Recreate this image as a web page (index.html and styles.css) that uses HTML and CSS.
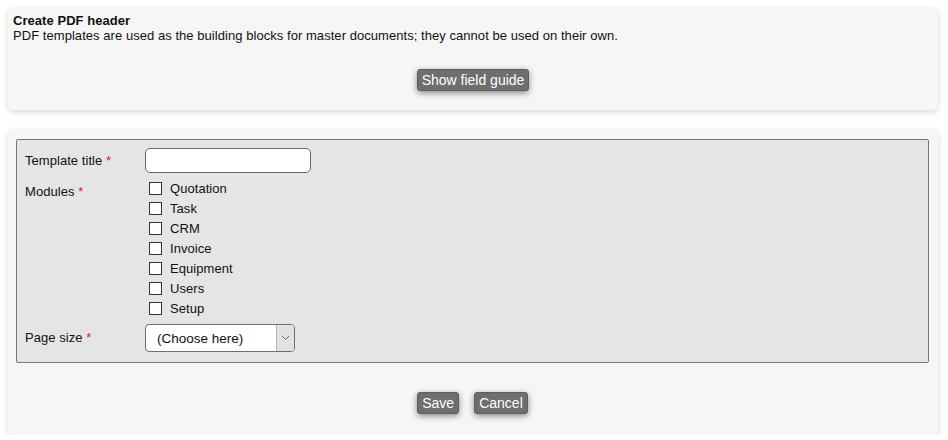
FILE: index.html
```html
<!DOCTYPE html>
<html>
<head>
<meta charset="utf-8">
<link rel="stylesheet" href="styles.css">
</head>
<body>
<div class="card intro">
  <div class="title">Create PDF header</div>
  <div class="desc">PDF templates are used as the building blocks for master documents; they cannot be used on their own.</div>
  <div class="actions guide-actions">
    <button class="btn" type="button">Show field guide</button>
  </div>
</div>
<div class="card formcard">
  <div class="fieldset">
    <label class="lbl center">Template title <span class="req">*</span></label>
    <div class="ctrl"><input class="text-input" type="text"></div>
    <label class="lbl top">Modules <span class="req">*</span></label>
    <div class="checks">
      <label class="check"><input type="checkbox"><span>Quotation</span></label>
      <label class="check"><input type="checkbox"><span>Task</span></label>
      <label class="check"><input type="checkbox"><span>CRM</span></label>
      <label class="check"><input type="checkbox"><span>Invoice</span></label>
      <label class="check"><input type="checkbox"><span>Equipment</span></label>
      <label class="check"><input type="checkbox"><span>Users</span></label>
      <label class="check"><input type="checkbox"><span>Setup</span></label>
    </div>
    <label class="lbl center">Page size <span class="req">*</span></label>
    <div class="ctrl select-row">
      <div class="select-wrap">
        <select class="select"><option>(Choose here)</option></select>
        <span class="arrow"><svg width="9" height="6" viewBox="0 0 9 6"><path d="M1 1 L4.5 4.5 L8 1" fill="none" stroke="#666" stroke-width="1"/></svg></span>
      </div>
    </div>
  </div>
  <div class="actions form-actions">
    <button class="btn" type="button">Save</button>
    <button class="btn" type="button">Cancel</button>
  </div>
</div>
</body>
</html>
```
FILE: styles.css
```css
html, body {
  margin: 0;
  padding: 0;
  background: #ffffff;
}
body {
  padding: 8px 10px 0 8px;
  font-family: "Liberation Sans", Arial, sans-serif;
  font-size: 13px;
  line-height: 15px;
  letter-spacing: 0.05px;
  color: #111111;
}
.card {
  background: #f6f6f6;
  border-radius: 5px;
  box-shadow: 0 2px 6px rgba(0, 0, 0, 0.16);
}
.intro {
  padding: 5px 5px 19px 5px;
}
.title {
  font-weight: bold;
}
.actions {
  display: flex;
  justify-content: center;
  gap: 15px;
}
.guide-actions {
  margin-top: 26px;
}
.btn {
  font-family: "Liberation Sans", Arial, sans-serif;
  font-size: 14px;
  line-height: 16px;
  letter-spacing: 0;
  color: #ffffff;
  background: #6e6e6e;
  border: 1px solid #5e5e5e;
  border-radius: 3px;
  padding: 2px 4px;
  box-shadow: 0 2px 6px rgba(0, 0, 0, 0.45);
  cursor: pointer;
}
.formcard {
  margin-top: 20px;
  padding: 9px 9px 21px 8px;
}
.fieldset {
  display: grid;
  grid-template-columns: 120px 1fr;
  row-gap: 5px;
  background: #e5e5e5;
  border: 1px solid #777777;
  border-radius: 2px;
  padding: 8px 8px 10px 8px;
}
.lbl.center {
  align-self: center;
}
.lbl.top {
  padding-top: 6px;
}
.req {
  color: #e02020;
}
.text-input {
  display: block;
  box-sizing: border-box;
  width: 166px;
  height: 25px;
  margin: 0;
  border: 1px solid #6a6a6a;
  border-radius: 5px;
  background: #ffffff;
  font-family: "Liberation Sans", Arial, sans-serif;
  font-size: 13px;
  padding: 0 6px;
}
.checks {
  display: flex;
  flex-direction: column;
}
.check {
  display: flex;
  align-items: center;
  height: 20px;
}
.check input {
  appearance: none;
  -webkit-appearance: none;
  box-sizing: border-box;
  width: 13px;
  height: 13px;
  margin: 0 8px 0 4px;
  background: #ffffff;
  border: 1px solid #333333;
  border-radius: 0;
}
.select-row {
  padding-top: 1px;
}
.select-wrap {
  display: flex;
  box-sizing: border-box;
  width: 150px;
  height: 28px;
  border: 1px solid #6f6f6f;
  border-radius: 4px;
  background: #ffffff;
  overflow: hidden;
}
.select {
  flex: 1;
  min-width: 0;
  appearance: none;
  -webkit-appearance: none;
  border: none;
  background: transparent;
  font-family: "Liberation Sans", Arial, sans-serif;
  font-size: 13.5px;
  color: #111111;
  padding: 0 0 0 11px;
  margin: 0;
  outline: none;
}
.arrow {
  width: 17px;
  display: flex;
  align-items: center;
  justify-content: center;
  background: #e2e2e2;
  border-left: 1px solid #b5b5b5;
}
.form-actions {
  margin-top: 29px;
}
```
